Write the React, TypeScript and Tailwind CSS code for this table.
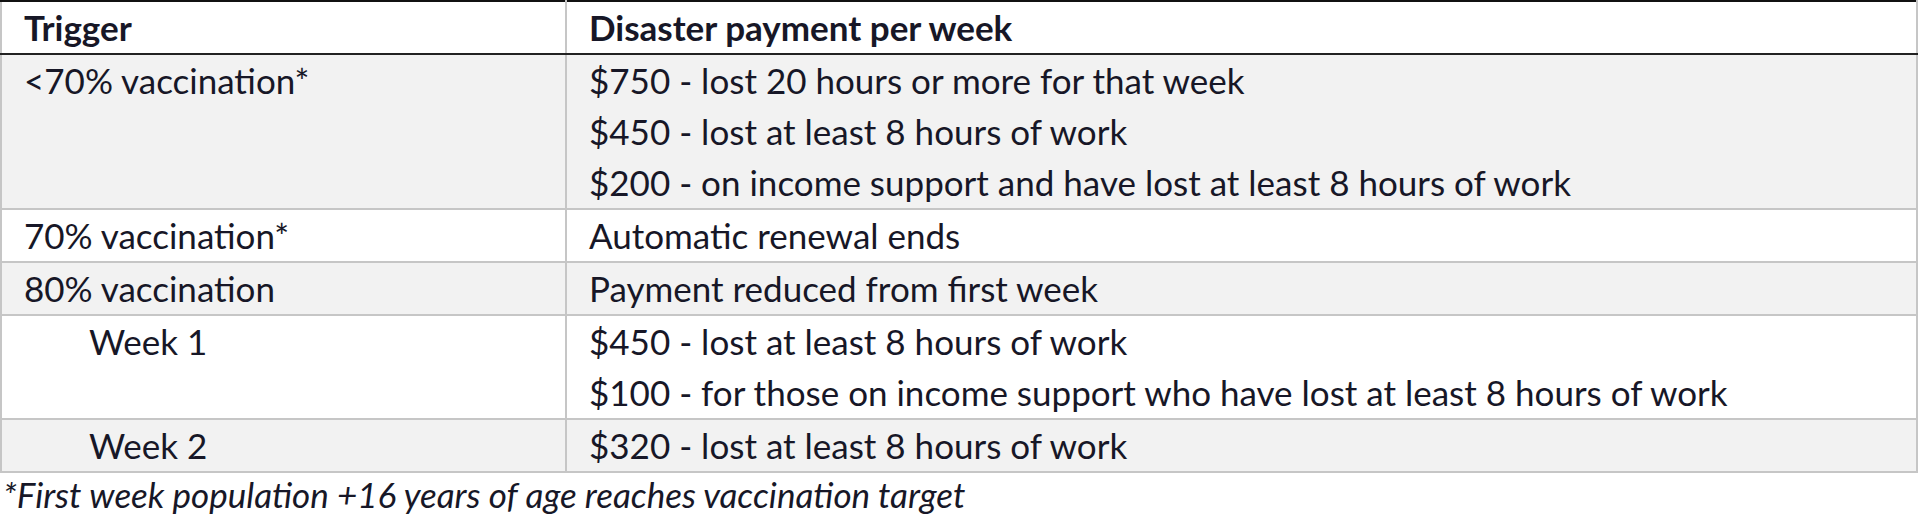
import React from "react";

type Row = {
  trigger: string;
  indent?: boolean;
  shaded: boolean;
  payments: string[];
};

const rows: Row[] = [
  {
    trigger: "<70% vaccination*",
    shaded: true,
    payments: [
      "$750 - lost 20 hours or more for that week",
      "$450 - lost at least 8 hours of work",
      "$200 - on income support and have lost at least 8 hours of work",
    ],
  },
  { trigger: "70% vaccination*", shaded: false, payments: ["Automatic renewal ends"] },
  { trigger: "80% vaccination", shaded: true, payments: ["Payment reduced from first week"] },
  {
    trigger: "Week 1",
    indent: true,
    shaded: false,
    payments: [
      "$450 - lost at least 8 hours of work",
      "$100 - for those on income support who have lost at least 8 hours of work",
    ],
  },
  {
    trigger: "Week 2",
    indent: true,
    shaded: true,
    payments: ["$320 - lost at least 8 hours of work"],
  },
];

const font = { fontFamily: "Lato, 'Open Sans', sans-serif" };

export default function App() {
  return (
    <div className="w-[1920px] h-[517px] overflow-hidden bg-white text-[#171727]" style={font}>
      <table className="w-[1918px] border-collapse table-fixed text-[35px] leading-[51px]">
        <colgroup>
          <col className="w-[565px]" />
          <col />
        </colgroup>
        <thead>
          <tr className="bg-white">
            <th className="border-t-2 border-t-[#111] border-b-2 border-b-[#222] border-l-2 border-l-[#c6c6c6] border-r-2 border-r-[#c6c6c6] p-0 pl-[22px] text-left font-bold">
              Trigger
            </th>
            <th className="border-t-2 border-t-[#111] border-b-2 border-b-[#222] border-r-2 border-r-[#c6c6c6] p-0 pl-[22px] text-left font-bold">
              Disaster payment per week
            </th>
          </tr>
        </thead>
        <tbody>
          {rows.map((row) => (
            <tr key={row.trigger} className={row.shaded ? "bg-[#f2f2f2]" : "bg-white"}>
              <td
                className={`align-top border-2 border-[#c6c6c6] p-0 ${
                  row.indent ? "pl-[87px]" : "pl-[22px]"
                }`}
              >
                {row.trigger}
              </td>
              <td className="align-top border-2 border-[#c6c6c6] p-0 pl-[22px]">
                {row.payments.map((p) => (
                  <div key={p}>{p}</div>
                ))}
              </td>
            </tr>
          ))}
        </tbody>
      </table>
      <p className="pl-[3px] text-[35px] leading-[42px] italic">
        *First week population +16 years of age reaches vaccination target
      </p>
    </div>
  );
}
